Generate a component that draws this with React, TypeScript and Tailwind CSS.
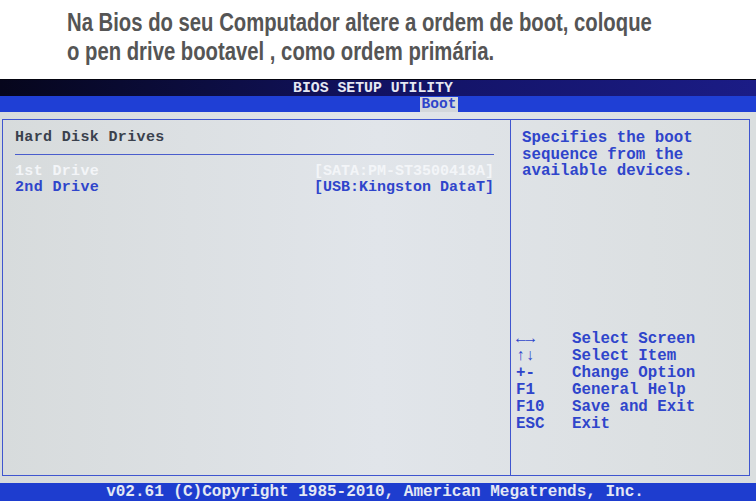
import React from 'react';

const mono = { fontFamily: '"Liberation Mono", "DejaVu Sans Mono", monospace' };

const helpKeys: [string, string][] = [
	['←→', 'Select Screen'],
	['↑↓', 'Select Item'],
	['+-', 'Change Option'],
	['F1', 'General Help'],
	['F10', 'Save and Exit'],
	['ESC', 'Exit'],
];

function Headline() {
	return (
		<div className="h-[79px] pl-[67px] pt-[8px] bg-white">
			<div
				className="origin-left scale-x-[0.78] whitespace-nowrap text-[26px] font-bold leading-[29px] text-[#555555]"
				style={{ fontFamily: '"Liberation Sans", Arial, sans-serif' }}
			>
				<p>Na Bios do seu Computador altere a ordem de boot, coloque</p>
				<p>o pen drive bootavel , como ordem primária.</p>
			</div>
		</div>
	);
}

function LeftPanel() {
	return (
		<div className="w-[508px] border-r border-[#3f55cf] pl-[12px] pr-[16px] pt-[10px] text-[15px] font-bold leading-[16px] tracking-[0.35px]">
			<div className="text-[#3a414d]">Hard Disk Drives</div>
			<div className="mt-[8px] h-px bg-[#4a5dcc]" />
			<div className="mt-[9px] flex justify-between text-[#f3f5f8]">
				<span>1st Drive</span>
				<span className="tracking-[0px]">[SATA:PM-ST3500418A]</span>
			</div>
			<div className="flex justify-between text-[#2f45cb]">
				<span>2nd Drive</span>
				<span className="tracking-[0px]">[USB:Kingston DataT]</span>
			</div>
		</div>
	);
}

function RightPanel() {
	return (
		<div className="flex flex-1 flex-col justify-between pb-[42px] pt-[10px] font-bold text-[#2f45cb]">
			<div className="pl-[11px] text-[15.8px] leading-[16.5px]">
				<p>Specifies the boot</p>
				<p>sequence from the</p>
				<p>available devices.</p>
			</div>
			<div className="flex flex-col pl-[5px] text-[15.8px] leading-[17px]">
				{helpKeys.map(([key, label]) => (
					<div key={key} className="flex">
						<span className="w-[56px]">{key}</span>
						<span>{label}</span>
					</div>
				))}
			</div>
		</div>
	);
}

export default function App() {
	return (
		<div className="flex h-[501px] w-[756px] flex-col overflow-hidden bg-white">
			<Headline />
			<div className="flex flex-1 flex-col bg-gradient-to-r from-[#d7dbdc] via-[#e1e5ea] to-[#dadedf]" style={mono}>
				<div className="h-px bg-[#05050f]" />
				<div className="flex h-[16px] items-center justify-center bg-gradient-to-r from-[#06061c] via-[#121262] to-[#1b1c86] pr-[10px] text-[14.8px] font-bold leading-none text-[#e6e8f2]">
					BIOS SETUP UTILITY
				</div>
				<div className="flex h-[16px] items-end bg-[#1f3fd5] pl-[420px]">
					<span className="flex h-[15px] w-[38px] items-center justify-center bg-[#d3d7db] text-[14.5px] font-bold leading-none text-[#2f45cb]">
						Boot
					</span>
				</div>
				<div className="flex flex-1 flex-col pl-[2px] pr-[6px] pb-[7px] pt-[7px]">
					<div className="flex flex-1 border border-[#3f55cf]">
						<LeftPanel />
						<RightPanel />
					</div>
				</div>
				<div className="flex h-[18px] items-center justify-center bg-[#1e3dcf] pr-[6px] text-[16px] font-bold leading-none text-[#e4e8f4]">
					v02.61 (C)Copyright 1985-2010, American Megatrends, Inc.
				</div>
			</div>
		</div>
	);
}
